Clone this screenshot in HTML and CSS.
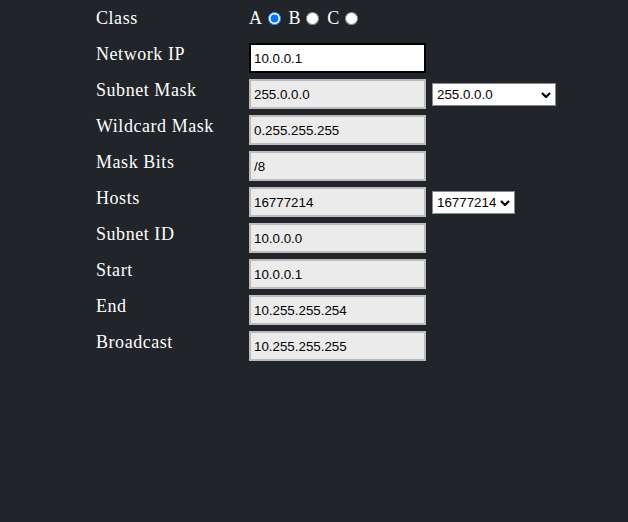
FILE: index.html
```html
<!DOCTYPE html>
<html>
<head>
<meta charset="utf-8">
<link rel="stylesheet" href="styles.css">
</head>
<body>
<div class="calc">
  <div class="label">Class</div>
  <div class="classes">A<input type="radio" name="cls" class="radio" checked> B<input type="radio" name="cls" class="radio"> C<input type="radio" name="cls" class="radio"></div>
  <div></div>

  <div class="label">Network IP</div>
  <input class="field field-edit" type="text" value="10.0.0.1">
  <div></div>

  <div class="label">Subnet Mask</div>
  <input class="field" type="text" value="255.0.0.0" readonly>
  <div class="select-wrap select-mask">
    <select class="choice"><option>255.0.0.0</option></select>
    <svg class="chev" width="10" height="6" viewBox="0 0 10 6"><path d="M1 1 L5 5 L9 1" fill="none" stroke="#000" stroke-width="2.2"/></svg>
  </div>

  <div class="label">Wildcard Mask</div>
  <input class="field" type="text" value="0.255.255.255" readonly>
  <div></div>

  <div class="label">Mask Bits</div>
  <input class="field" type="text" value="/8" readonly>
  <div></div>

  <div class="label">Hosts</div>
  <input class="field" type="text" value="16777214" readonly>
  <div class="select-wrap select-hosts">
    <select class="choice"><option>16777214</option></select>
    <svg class="chev" width="10" height="6" viewBox="0 0 10 6"><path d="M1 1 L5 5 L9 1" fill="none" stroke="#000" stroke-width="2.2"/></svg>
  </div>

  <div class="label">Subnet ID</div>
  <input class="field" type="text" value="10.0.0.0" readonly>
  <div></div>

  <div class="label">Start</div>
  <input class="field" type="text" value="10.0.0.1" readonly>
  <div></div>

  <div class="label">End</div>
  <input class="field" type="text" value="10.255.255.254" readonly>
  <div></div>

  <div class="label">Broadcast</div>
  <input class="field" type="text" value="10.255.255.255" readonly>
  <div></div>
</div>
</body>
</html>
```
FILE: styles.css
```css
html, body {
  margin: 0;
  padding: 0;
  background: #212529;
  height: 100%;
}
body {
  font-family: "Liberation Serif", "Times New Roman", serif;
  font-size: 18px;
  color: #ffffff;
}
.calc {
  display: grid;
  grid-template-columns: 147px 177px auto;
  grid-auto-rows: 30px;
  column-gap: 6px;
  row-gap: 6px;
  padding: 7px 0 0 96px;
  justify-content: start;
  align-items: start;
}
.label {
  padding-top: 1px;
  line-height: normal;
  letter-spacing: 0.55px;
  white-space: nowrap;
}
.classes {
  padding-top: 1px;
  white-space: nowrap;
  line-height: normal;
  letter-spacing: 0.55px;
}
.radio {
  width: 13px;
  height: 13px;
  margin: 0 3px 0 5px;
  vertical-align: -1px;
}
.field {
  box-sizing: border-box;
  width: 177px;
  height: 30px;
  margin: 0;
  padding: 1px 3px;
  font-family: "Liberation Sans", Arial, sans-serif;
  font-size: 13.333px;
  color: #000;
  background: #ebebeb;
  border: 2px solid #bcbcbc;
  outline: none;
}
.field-edit {
  background: #ffffff;
  border-color: #000000;
}
.select-wrap {
  position: relative;
  align-self: center;
  height: 23px;
}
.select-mask { width: 124px; }
.select-hosts { width: 83px; }
.choice {
  -webkit-appearance: none;
  appearance: none;
  box-sizing: border-box;
  display: block;
  width: 100%;
  height: 23px;
  margin: 0;
  padding: 0 18px 0 4px;
  font-family: "Liberation Sans", Arial, sans-serif;
  font-size: 13.333px;
  color: #000;
  background: #fff;
  border: 1px solid #8a8a8a;
  border-radius: 0;
}
.chev {
  position: absolute;
  right: 5px;
  top: 9px;
  pointer-events: none;
}
```
